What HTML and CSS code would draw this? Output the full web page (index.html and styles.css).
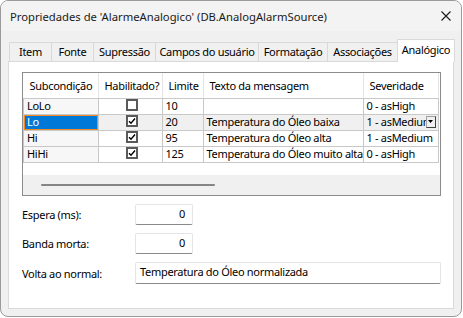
FILE: index.html
```html
<html>
    <head>
        <title>Propriedades de 'AlarmeAnalogico'</title>
        <link rel="stylesheet" href="styles.css">
    </head>
    <body>
        <div class="window">
            <div class="titleBar">
                <span class="titleText">Propriedades de 'AlarmeAnalogico' (DB.AnalogAlarmSource)</span>
                <svg class="closeIcon" width="10" height="10" viewBox="0 0 10 10">
                    <path d="M0.5 0.5 L9.5 9.5 M9.5 0.5 L0.5 9.5" stroke="#1a1a1a" stroke-width="1.1" fill="none"/>
                </svg>
            </div>

            <div class="tabStrip">
                <div class="tab tabItem">Item</div>
                <div class="tab tabFonte">Fonte</div>
                <div class="tab tabSup">Supressão</div>
                <div class="tab tabCampos">Campos do usuário</div>
                <div class="tab tabFormat">Formatação</div>
                <div class="tab tabAssoc">Associações</div>
                <div class="tab tabActive">Analógico</div>
            </div>

            <div class="tabPanel">
                <div class="grid">
                    <table class="gridTable">
                        <tr class="headRow">
                            <th class="colSub">Subcondição</th>
                            <th class="colHab">Habilitado?</th>
                            <th class="colLim">Limite</th>
                            <th class="colText">Texto da mensagem</th>
                            <th class="colSev">Severidade</th>
                            <th class="colRest"></th>
                        </tr>
                        <tr>
                            <td class="rowHead">LoLo</td>
                            <td class="center"><span class="check"></span></td>
                            <td>10</td>
                            <td></td>
                            <td>0 - asHigh</td>
                            <td class="colRest"></td>
                        </tr>
                        <tr class="selectedRow">
                            <td class="rowHead focused">Lo</td>
                            <td class="center"><span class="check checked"><svg width="8" height="8" viewBox="0 0 8 8"><path d="M1 4.2 L3 6.3 L7 1.5" stroke="#000" stroke-width="1.4" fill="none"/></svg></span></td>
                            <td>20</td>
                            <td>Temperatura do Óleo baixa</td>
                            <td class="comboCell"><span class="comboText">1 - asMedium</span><span class="comboButton"><svg width="5" height="3" viewBox="0 0 5 3"><path d="M0 0 H5 L2.5 3 Z" fill="#000"/></svg></span></td>
                            <td class="colRest"></td>
                        </tr>
                        <tr>
                            <td class="rowHead">Hi</td>
                            <td class="center"><span class="check checked"><svg width="8" height="8" viewBox="0 0 8 8"><path d="M1 4.2 L3 6.3 L7 1.5" stroke="#000" stroke-width="1.4" fill="none"/></svg></span></td>
                            <td>95</td>
                            <td>Temperatura do Óleo alta</td>
                            <td>1 - asMedium</td>
                            <td class="colRest"></td>
                        </tr>
                        <tr>
                            <td class="rowHead">HiHi</td>
                            <td class="center"><span class="check checked"><svg width="8" height="8" viewBox="0 0 8 8"><path d="M1 4.2 L3 6.3 L7 1.5" stroke="#000" stroke-width="1.4" fill="none"/></svg></span></td>
                            <td>125</td>
                            <td>Temperatura do Óleo muito alta</td>
                            <td>0 - asHigh</td>
                            <td class="colRest"></td>
                        </tr>
                    </table>
                    <div class="gridEmpty"></div>
                    <div class="scrollBar"><div class="scrollThumb"></div></div>
                </div>

                <div class="fieldRow">
                    <span class="fieldLabel">Espera (ms):</span>
                    <div class="input inputShort">0</div>
                </div>
                <div class="fieldRow">
                    <span class="fieldLabel">Banda morta:</span>
                    <div class="input inputShort">0</div>
                </div>
                <div class="fieldRow">
                    <span class="fieldLabel">Volta ao normal:</span>
                    <div class="input inputLong">Temperatura do Óleo normalizada</div>
                </div>
            </div>
        </div>
    </body>
</html>
```

FILE: styles.css
```css
body {
    margin: 0;
    background-color: #ffffff;
    font-family: "Noto Sans", "Open Sans", sans-serif;
    font-size: 11px;
    letter-spacing: -0.3px;
    color: #000000;
}

.window {
    width: 460px;
    height: 315px;
    border: 1px solid #9a9a9a;
    border-radius: 8px;
    background-color: #f0f0f0;
    overflow: hidden;
}

.titleBar {
    height: 30px;
    display: flex;
    align-items: center;
    justify-content: space-between;
    padding: 0 10px 0 9px;
    background-color: #f3f3f3;
    font-size: 11.25px;
    letter-spacing: 0;
    color: #1a1a1a;
}

.titleText {
    margin-top: 1px;
}

.tabStrip {
    display: flex;
    align-items: flex-end;
    height: 30px;
    padding-left: 8px;
    box-sizing: border-box;
}

.tab {
    height: 19px;
    line-height: 18px;
    box-sizing: border-box;
    border: 1px solid #d9d9d9;
    border-bottom: none;
    border-right: none;
    background-color: #f0f0f0;
    text-align: center;
    white-space: nowrap;
}

.tabItem { width: 42px; }
.tabFonte { width: 42px; }
.tabSup { width: 62px; }
.tabCampos { width: 103px; }
.tabFormat { width: 69px; }
.tabAssoc { width: 70px; }

.tabActive {
    width: 58px;
    height: 23px;
    line-height: 20px;
    margin-bottom: -1px;
    background-color: #ffffff;
    border-right: 1px solid #d9d9d9;
    position: relative;
}

.tabPanel {
    margin: 0 7px;
    height: 248px;
    box-sizing: border-box;
    border: 1px solid #d9d9d9;
    background-color: #ffffff;
    padding: 10px 0 0 13px;
}

.grid {
    width: 419px;
    height: 124px;
    box-sizing: border-box;
    border: 1px solid #8c8c8c;
    display: flex;
    flex-direction: column;
    background-color: #ffffff;
}

.gridTable {
    border-collapse: collapse;
    table-layout: fixed;
    width: 417px;
    font: inherit;
    letter-spacing: inherit;
}

.gridTable th {
    height: 25px;
    font-weight: normal;
    text-align: left;
    padding: 0 0 0 6px;
    border-right: 1px solid #e5e5e5;
    border-bottom: 1px solid #c8c8c8;
    white-space: nowrap;
    overflow: hidden;
}

.gridTable td {
    height: 16px;
    padding: 0 0 0 3px;
    border: 1px solid #c8c8c8;
    white-space: nowrap;
    overflow: hidden;
    line-height: 14px;
}

.gridTable .colRest {
    border: none;
    padding: 0;
}

.colSub { width: 68px; }
.colHab { width: 57px; }
.colLim { width: 34px; }
.colText { width: 153px; }
.colSev { width: 68px; }

.rowHead {
    background-color: #f7f7f7;
}

.center {
    text-align: center;
}

.selectedRow td {
    background-color: #f0f0f0;
}

.selectedRow td.colRest {
    background-color: #ffffff;
}

.selectedRow td.focused {
    background-color: #0078d7;
    color: #ffffff;
    box-shadow: inset 0 0 0 1px #f08a24;
}

.check {
    display: inline-block;
    width: 8px;
    height: 8px;
    border: 2px solid #5a5a5a;
    background-color: #ffffff;
    vertical-align: middle;
    position: relative;
    top: -1px;
}

.check svg {
    display: block;
}

.comboCell {
    position: relative;
}

.comboText {
    display: block;
    width: 60px;
    overflow: hidden;
}

.comboButton {
    position: absolute;
    right: 2px;
    top: 1px;
    width: 10px;
    height: 12px;
    box-sizing: border-box;
    border: 1px solid #a0a0a0;
    border-right-color: #404040;
    border-bottom-color: #404040;
    background-color: #f0f0f0;
    display: flex;
    align-items: center;
    justify-content: center;
}

.gridEmpty {
    height: 12px;
}

.scrollBar {
    flex: 1;
    background-color: #f0f0f0;
    display: flex;
    align-items: center;
    padding-left: 18px;
}

.scrollThumb {
    width: 174px;
    height: 2px;
    background-color: #858585;
    border-radius: 1px;
}

.fieldRow {
    display: flex;
    align-items: center;
    margin-top: 8px;
}

.fieldLabel {
    width: 113px;
}

.input {
    height: 21px;
    box-sizing: border-box;
    border: 1px solid #e5e5e5;
    border-bottom-color: #8a8a8a;
    border-radius: 2px;
    background-color: #ffffff;
    line-height: 18px;
    padding: 0 7px;
}

.inputShort {
    width: 58px;
    text-align: right;
}

.inputLong {
    width: 306px;
    height: 22px;
    padding: 0 4px;
}
```
